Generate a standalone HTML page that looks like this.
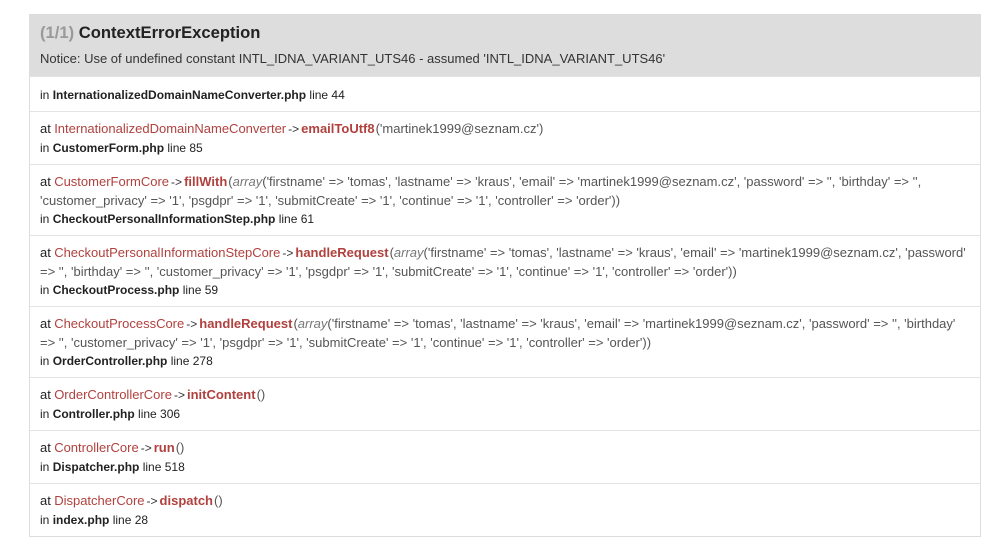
<!DOCTYPE html>
<html><head><style>
body{margin:0;background:#fff;font-family:"Liberation Sans",Arial,sans-serif;font-size:12px;color:#222;}
.panel{position:absolute;left:29px;top:14px;width:950px;border:1px solid #ddd;border-top:none;}
.head{background:#ddd;height:62px;position:relative;}
.head h1{position:absolute;left:10px;top:9px;margin:0;font-size:16.6px;font-weight:bold;color:#222;}
.head h1 span{color:#999;}
.head p{position:absolute;left:10px;top:37px;margin:0;font-size:13px;color:#333;}
.row{border-top:1px solid #e4e4e4;box-sizing:border-box;padding:8px 10px 0 10px;line-height:18.5px;}
.row:first-of-type{border-top:none}
.at{font-size:13px}
.ar{font-size:12px;margin:0 2px 0 2px;color:#333}
.c{color:#b0413e;font-size:13px}
.m{color:#b0413e;font-weight:bold;font-size:13px}
.a{color:#555;font-size:13px;margin-left:1px}
.a i{color:#777}
b{color:#222}
</style></head><body>
<div class="panel">
<div class="head"><h1><span>(1/1)</span> ContextErrorException</h1><p>Notice: Use of undefined constant INTL_IDNA_VARIANT_UTS46 - assumed 'INTL_IDNA_VARIANT_UTS46'</p></div>
<div class="row" style="height:35px;padding-top:9px">in <b>InternationalizedDomainNameConverter.php</b> line 44</div>
<div class="row" style="height:53px"><span class="at">at</span> <span class="c">InternationalizedDomainNameConverter</span><span class="ar">-&gt;</span><span class="m">emailToUtf8</span><span class="a">('martinek1999@seznam.cz')</span><br>in <b>CustomerForm.php</b> line 85</div>
<div class="row" style="height:71px"><span class="at">at</span> <span class="c">CustomerFormCore</span><span class="ar">-&gt;</span><span class="m">fillWith</span><span class="a">(<i>array</i>('firstname' =&gt; 'tomas', 'lastname' =&gt; 'kraus', 'email' =&gt; 'martinek1999@seznam.cz', 'password' =&gt; '', 'birthday' =&gt; '', 'customer_privacy' =&gt; '1', 'psgdpr' =&gt; '1', 'submitCreate' =&gt; '1', 'continue' =&gt; '1', 'controller' =&gt; 'order'))</span><br>in <b>CheckoutPersonalInformationStep.php</b> line 61</div>
<div class="row" style="height:71px"><span class="at">at</span> <span class="c">CheckoutPersonalInformationStepCore</span><span class="ar">-&gt;</span><span class="m">handleRequest</span><span class="a">(<i>array</i>('firstname' =&gt; 'tomas', 'lastname' =&gt; 'kraus', 'email' =&gt; 'martinek1999@seznam.cz', 'password' =&gt; '', 'birthday' =&gt; '', 'customer_privacy' =&gt; '1', 'psgdpr' =&gt; '1', 'submitCreate' =&gt; '1', 'continue' =&gt; '1', 'controller' =&gt; 'order'))</span><br>in <b>CheckoutProcess.php</b> line 59</div>
<div class="row" style="height:71px"><span class="at">at</span> <span class="c">CheckoutProcessCore</span><span class="ar">-&gt;</span><span class="m">handleRequest</span><span class="a">(<i>array</i>('firstname' =&gt; 'tomas', 'lastname' =&gt; 'kraus', 'email' =&gt; 'martinek1999@seznam.cz', 'password' =&gt; '', 'birthday' =&gt; '', 'customer_privacy' =&gt; '1', 'psgdpr' =&gt; '1', 'submitCreate' =&gt; '1', 'continue' =&gt; '1', 'controller' =&gt; 'order'))</span><br>in <b>OrderController.php</b> line 278</div>
<div class="row" style="height:53px"><span class="at">at</span> <span class="c">OrderControllerCore</span><span class="ar">-&gt;</span><span class="m">initContent</span><span class="a">()</span><br>in <b>Controller.php</b> line 306</div>
<div class="row" style="height:53px"><span class="at">at</span> <span class="c">ControllerCore</span><span class="ar">-&gt;</span><span class="m">run</span><span class="a">()</span><br>in <b>Dispatcher.php</b> line 518</div>
<div class="row" style="height:53px"><span class="at">at</span> <span class="c">DispatcherCore</span><span class="ar">-&gt;</span><span class="m">dispatch</span><span class="a">()</span><br>in <b>index.php</b> line 28</div>
</div>
</body></html>
